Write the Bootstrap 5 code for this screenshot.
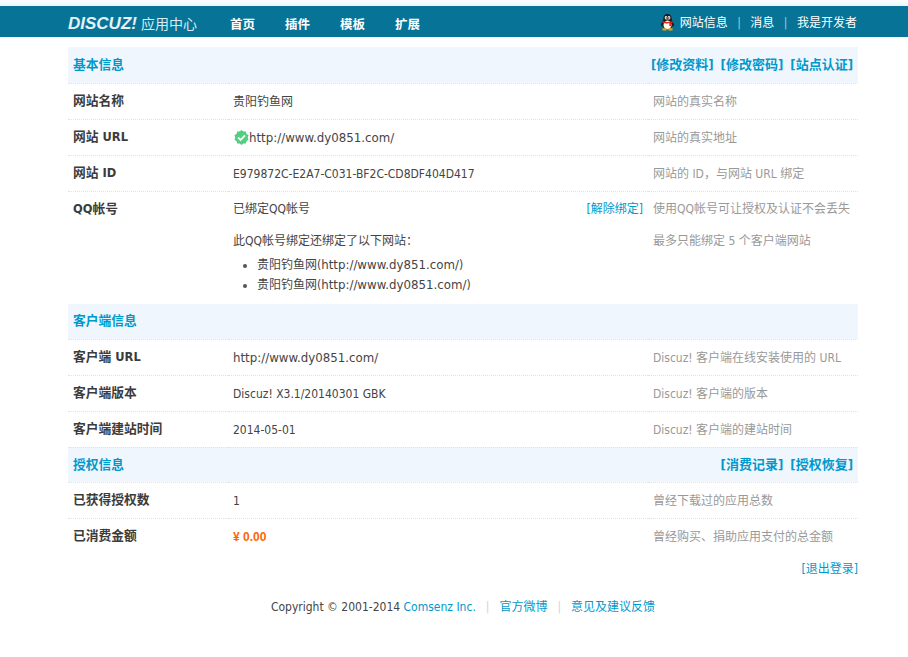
<!DOCTYPE html>
<html lang="zh">
<head>
<meta charset="utf-8">
<title>应用中心</title>
<link href="https://cdn.jsdelivr.net/npm/bootstrap@5.3.0/dist/css/bootstrap.min.css" rel="stylesheet">
<style>
body{font:12px/18px "DejaVu Sans Condensed","DejaVu Sans","Noto Sans CJK SC",sans-serif;color:#444;background:#fff;padding-top:6px}
body::before{content:"";position:absolute;left:0;right:0;top:0;height:6px;background:linear-gradient(#fff,#eef4fb)}
a{text-decoration:none;color:#0099cc}
.url{font-family:"DejaVu Sans","Noto Sans CJK SC",sans-serif;font-size:11.8px}
.app-head{background:#067397;height:31px;padding:0 51px 0 68px}
.app-logo{width:162px;color:#d8ebf2;line-height:36px;font-size:14px;white-space:nowrap}
.app-logo i{font:italic 900 17px/36px "Liberation Sans",sans-serif;color:#e4f1f6;margin-right:4px}
.app-nav a{color:#fff;font-weight:700;font-size:12.500px;width:55px;line-height:37px;display:block}
.app-user{color:#fff;line-height:35px}
.app-user a{color:#fff}
.app-sep{color:#a9cbd8;margin:0 9.500px}
.app-main{margin:10px 50px 0 68px}
table.info{table-layout:fixed;margin:0;width:790px;color:#444;--bs-table-bg:transparent}
table.info td{padding:1px 5px 0;height:36px;border-bottom:1px dotted #cfe8f7;vertical-align:middle;line-height:18px;box-shadow:none}
.c1{width:160px}
.c3{width:210px}
table.info td.lab{font-weight:700;color:#3c3c3c;font-size:12.750px;padding-top:0}
table.info td.hint{color:#999}
table.info tr.sec td{background:#f0f6fd;padding-top:0}
table.info tr.sec.tight td{height:35px}
.sec b{color:#0099cc;font-weight:700;font-size:12.750px}
.sec a{font-weight:700;font-size:13px;margin-left:7px}
table.info td.top{vertical-align:top;padding-top:8px;border-bottom:0;height:113px}
table.info td.lab.top{padding-top:8px}
.qq-line{margin-bottom:14px}
.qq-list{margin:5px 0 0;padding-left:24px;line-height:20px}
.qq-list li::marker{color:#555}
.pay{color:#ff6600;font:700 12px/18px "Liberation Sans",sans-serif}
.out{margin-top:6px;text-align:right;line-height:18px}
.app-foot{margin-top:20px;line-height:18px;text-align:center}
.app-foot .s{color:#c4d6e4;margin:0 10px}
.ok{vertical-align:-3px;margin-left:1px}
.qq-ico{vertical-align:-4px;margin-right:5px}
</style>
</head>
<body>
<header class="app-head d-flex align-items-start">
  <div class="app-logo"><i>DISCUZ!</i>应用中心</div>
  <nav class="app-nav d-flex"><a href="#">首页</a><a href="#">插件</a><a href="#">模板</a><a href="#">扩展</a></nav>
  <div class="app-user ms-auto">
    <svg class="qq-ico" width="15" height="17" viewBox="0 0 15 17"><path d="M7.500 0C4.600 0 3.300 2.300 3.300 5c0 1-.3 1.700-1 2.800C1.200 9.500.6 11 1 12.500c.7-.2 1-.5 1.300-1 .3 1.300 1 2.200 1.700 2.900h7c.7-.7 1.400-1.600 1.700-2.900.3.500.6.800 1.300 1 .4-1.500-.2-3-1.300-4.700-.7-1.100-1-1.800-1-2.800C11.700 2.300 10.400 0 7.500 0z" fill="#1c1c1c"/><ellipse cx="7.500" cy="11" rx="4" ry="4.300" fill="#fff"/><ellipse cx="6" cy="3.700" rx="1.300" ry="1.700" fill="#fff"/><ellipse cx="9" cy="3.700" rx="1.300" ry="1.700" fill="#fff"/><circle cx="6.200" cy="4" r=".7" fill="#111"/><circle cx="8.800" cy="4" r=".7" fill="#111"/><path d="M5.500 5.500h4l-2 1.200z" fill="#f5a800"/><path d="M2.600 7c2 1.200 7.800 1.200 9.800 0l.4 1.700-1.800.7.300 3-2-.7V9.300c-2 .3-5 .2-6.900-.6z" fill="#e02818"/><path d="M2.500 14.200h4v2.300h-4zM8.500 14.200h4v2.300h-4z" fill="#f3a200"/></svg><a href="#">网站信息</a><span class="app-sep">|</span><a href="#">消息</a><span class="app-sep">|</span><a href="#">我是开发者</a>
  </div>
</header>
<main class="app-main">
<table class="table info">
<colgroup><col class="c1"><col><col class="c3"></colgroup>
<tbody>
<tr class="sec"><td colspan="3"><div class="d-flex justify-content-between"><b>基本信息</b><span><a href="#">[修改资料]</a><a href="#">[修改密码]</a><a href="#">[站点认证]</a></span></div></td></tr>
<tr><td class="lab">网站名称</td><td>贵阳钓鱼网</td><td class="hint">网站的真实名称</td></tr>
<tr><td class="lab">网站 URL</td><td><svg class="ok" width="15" height="15" viewBox="0 0 16 16"><path d="M8 0l2 1.700 2.600-.2.600 2.600L15.500 5.500 14.600 8l.9 2.500-2.300 1.400-.6 2.600-2.600-.2L8 16l-2-1.700-2.600.2-.6-2.600L.5 10.500 1.400 8 .5 5.500l2.300-1.400.6-2.600 2.600.2z" fill="#4fd07f"/><path d="M4.300 8l2.700 2.700 4.700-4.900" fill="none" stroke="#fff" stroke-width="2"/></svg><span class="url">http://www.dy0851.com/</span></td><td class="hint">网站的真实地址</td></tr>
<tr><td class="lab">网站 ID</td><td>E979872C-E2A7-C031-BF2C-CD8DF404D417</td><td class="hint">网站的 ID，与网站 URL 绑定</td></tr>
<tr>
  <td class="lab top">QQ帐号</td>
  <td class="top">
    <div class="d-flex justify-content-between qq-line"><span>已绑定QQ帐号</span><a href="#">[解除绑定]</a></div>
    <div>此QQ帐号绑定还绑定了以下网站：</div>
    <ul class="qq-list"><li>贵阳钓鱼网(<span class="url">http://www.dy851.com/</span>)</li><li>贵阳钓鱼网(<span class="url">http://www.dy0851.com/</span>)</li></ul>
  </td>
  <td class="hint top"><div class="qq-line">使用QQ帐号可让授权及认证不会丢失</div><div>最多只能绑定 5 个客户端网站</div></td>
</tr>
<tr class="sec tight"><td colspan="3"><b>客户端信息</b></td></tr>
<tr><td class="lab">客户端 URL</td><td><span class="url">http://www.dy0851.com/</span></td><td class="hint">Discuz! 客户端在线安装使用的 URL</td></tr>
<tr><td class="lab">客户端版本</td><td>Discuz! X3.1/20140301 GBK</td><td class="hint">Discuz! 客户端的版本</td></tr>
<tr><td class="lab">客户端建站时间</td><td>2014-05-01</td><td class="hint">Discuz! 客户端的建站时间</td></tr>
<tr class="sec tight"><td colspan="3"><div class="d-flex justify-content-between"><b>授权信息</b><span><a href="#">[消费记录]</a><a href="#">[授权恢复]</a></span></div></td></tr>
<tr><td class="lab">已获得授权数</td><td>1</td><td class="hint">曾经下载过的应用总数</td></tr>
<tr><td class="lab border-0">已消费金额</td><td class="border-0"><span class="pay">¥ 0.00</span></td><td class="hint border-0">曾经购买、捐助应用支付的总金额</td></tr>
</tbody>
</table>
<div class="out"><a href="#">[退出登录]</a></div>
<footer class="app-foot">Copyright © 2001-2014 <a href="#">Comsenz Inc.</a><span class="s">|</span><a href="#">官方微博</a><span class="s">|</span><a href="#">意见及建议反馈</a></footer>
</main>
</body>
</html>
